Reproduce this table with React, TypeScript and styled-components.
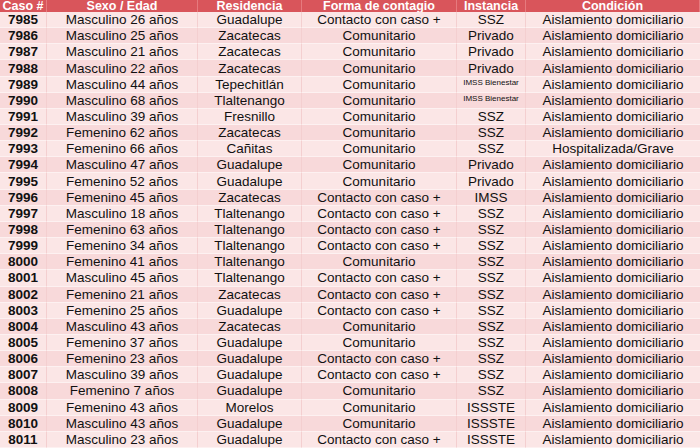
import React from "react";
import styled, { createGlobalStyle } from "styled-components";

type Caso = {
  id: string;
  sexo: string;
  residencia: string;
  forma: string;
  instancia: string;
  condicion: string;
};

const C = "Comunitario";
const CC = "Contacto con caso +";
const AD = "Aislamiento domiciliario";

const casos: Caso[] = [
  { id: "7985", sexo: "Masculino 26 años", residencia: "Guadalupe", forma: CC, instancia: "SSZ", condicion: AD },
  { id: "7986", sexo: "Masculino 25 años", residencia: "Zacatecas", forma: C, instancia: "Privado", condicion: AD },
  { id: "7987", sexo: "Masculino 21 años", residencia: "Zacatecas", forma: C, instancia: "Privado", condicion: AD },
  { id: "7988", sexo: "Masculino 22 años", residencia: "Zacatecas", forma: C, instancia: "Privado", condicion: AD },
  { id: "7989", sexo: "Masculino 44 años", residencia: "Tepechitlán", forma: C, instancia: "IMSS Bienestar", condicion: AD },
  { id: "7990", sexo: "Masculino 68 años", residencia: "Tlaltenango", forma: C, instancia: "IMSS Bienestar", condicion: AD },
  { id: "7991", sexo: "Masculino 39 años", residencia: "Fresnillo", forma: C, instancia: "SSZ", condicion: AD },
  { id: "7992", sexo: "Femenino 62 años", residencia: "Zacatecas", forma: C, instancia: "SSZ", condicion: AD },
  { id: "7993", sexo: "Femenino 66 años", residencia: "Cañitas", forma: C, instancia: "SSZ", condicion: "Hospitalizada/Grave" },
  { id: "7994", sexo: "Masculino 47 años", residencia: "Guadalupe", forma: C, instancia: "Privado", condicion: AD },
  { id: "7995", sexo: "Femenino 52 años", residencia: "Guadalupe", forma: C, instancia: "Privado", condicion: AD },
  { id: "7996", sexo: "Femenino 45 años", residencia: "Zacatecas", forma: CC, instancia: "IMSS", condicion: AD },
  { id: "7997", sexo: "Masculino 18 años", residencia: "Tlaltenango", forma: CC, instancia: "SSZ", condicion: AD },
  { id: "7998", sexo: "Femenino 63 años", residencia: "Tlaltenango", forma: CC, instancia: "SSZ", condicion: AD },
  { id: "7999", sexo: "Femenino 34 años", residencia: "Tlaltenango", forma: CC, instancia: "SSZ", condicion: AD },
  { id: "8000", sexo: "Femenino 41 años", residencia: "Tlaltenango", forma: C, instancia: "SSZ", condicion: AD },
  { id: "8001", sexo: "Masculino 45 años", residencia: "Tlaltenango", forma: CC, instancia: "SSZ", condicion: AD },
  { id: "8002", sexo: "Femenino 21 años", residencia: "Zacatecas", forma: CC, instancia: "SSZ", condicion: AD },
  { id: "8003", sexo: "Femenino 25 años", residencia: "Guadalupe", forma: CC, instancia: "SSZ", condicion: AD },
  { id: "8004", sexo: "Masculino 43 años", residencia: "Zacatecas", forma: C, instancia: "SSZ", condicion: AD },
  { id: "8005", sexo: "Femenino 37 años", residencia: "Guadalupe", forma: C, instancia: "SSZ", condicion: AD },
  { id: "8006", sexo: "Femenino 23 años", residencia: "Guadalupe", forma: CC, instancia: "SSZ", condicion: AD },
  { id: "8007", sexo: "Masculino 39 años", residencia: "Guadalupe", forma: CC, instancia: "SSZ", condicion: AD },
  { id: "8008", sexo: "Femenino 7 años", residencia: "Guadalupe", forma: C, instancia: "SSZ", condicion: AD },
  { id: "8009", sexo: "Femenino 43 años", residencia: "Morelos", forma: C, instancia: "ISSSTE", condicion: AD },
  { id: "8010", sexo: "Masculino 43 años", residencia: "Guadalupe", forma: C, instancia: "ISSSTE", condicion: AD },
  { id: "8011", sexo: "Masculino 23 años", residencia: "Guadalupe", forma: CC, instancia: "ISSSTE", condicion: AD },
];

const headers = ["Caso #", "Sexo / Edad", "Residencia", "Forma de contagio", "Instancia", "Condición"];

const GlobalStyle = createGlobalStyle`
  html, body {
    margin: 0;
    padding: 0;
    background: #fbe3e3;
  }
  body {
    font-family: "Liberation Sans", Arial, sans-serif;
  }
`;

const Table = styled.div`
  width: 700px;
  height: 448px;
  display: grid;
  grid-template-columns: 47px 151px 104px 155px 69px 1fr;
  grid-template-rows: 12px repeat(27, 1fr);
  overflow: hidden;
`;

const HeadCell = styled.div`
  background: #d9555b;
  color: #fff;
  font-weight: bold;
  font-size: 12.5px;
  line-height: 12px;
  display: flex;
  align-items: center;
  justify-content: center;
  border-right: 1px solid #e67a7e;
  white-space: nowrap;
  overflow: hidden;
  &:last-child {
    border-right: none;
  }
`;

const Cell = styled.div<{ $odd: boolean; $bold?: boolean; $small?: boolean }>`
  background: ${(p) => (p.$odd ? "#fbe6e6" : "#f8d9da")};
  color: #111;
  font-size: ${(p) => (p.$small ? "8px" : "13.5px")};
  font-weight: ${(p) => (p.$bold ? "bold" : "normal")};
  display: flex;
  align-items: center;
  justify-content: center;
  border-right: 1px solid #f4cfd0;
  border-bottom: 1px solid #fdf1f1;
  white-space: nowrap;
  overflow: hidden;
  box-sizing: border-box;
  padding-bottom: ${(p) => (p.$small ? "3px" : "0")};
  &:nth-child(6n) {
    border-right: none;
  }
`;

export default function App() {
  return (
    <>
      <GlobalStyle />
      <Table>
        {headers.map((h) => (
          <HeadCell key={h}>{h}</HeadCell>
        ))}
        {casos.map((c, i) => {
          const odd = i % 2 === 0;
          return (
            <React.Fragment key={c.id}>
              <Cell $odd={odd} $bold>
                {c.id}
              </Cell>
              <Cell $odd={odd}>{c.sexo}</Cell>
              <Cell $odd={odd}>{c.residencia}</Cell>
              <Cell $odd={odd}>{c.forma}</Cell>
              <Cell $odd={odd} $small={c.instancia === "IMSS Bienestar"}>
                {c.instancia}
              </Cell>
              <Cell $odd={odd}>{c.condicion}</Cell>
            </React.Fragment>
          );
        })}
      </Table>
    </>
  );
}
